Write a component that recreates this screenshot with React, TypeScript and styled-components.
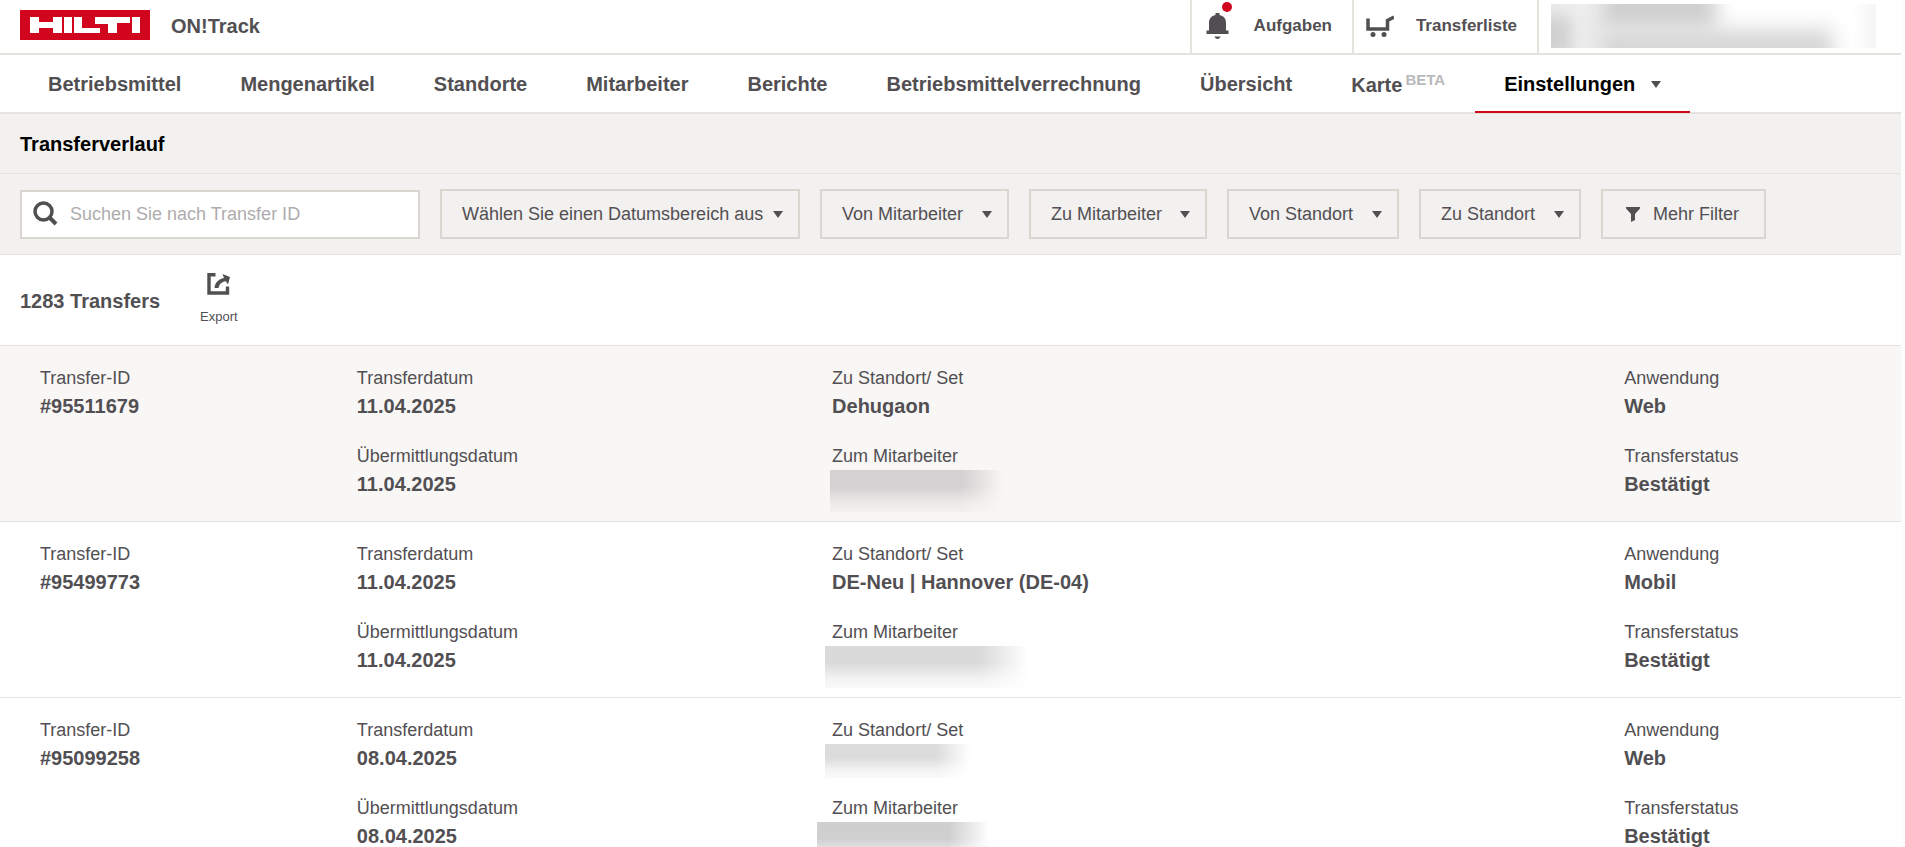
import React from "react";
import styled, { createGlobalStyle } from "styled-components";

const ink = "#524f53";
const line = "#e4e4de";
const edge = "#d7d7d0";
const red = "#d2051e";

const GlobalStyle = createGlobalStyle`
  *, *::before, *::after { box-sizing: border-box; }
  html { overflow: hidden; height: 100%; background: #fcfcfc; }
  body {
    margin: 0;
    height: 100%;
    overflow: hidden;
    font-family: "Liberation Sans", Arial, Helvetica, sans-serif;
    font-size: 18px;
    line-height: 24px;
    color: ${ink};
  }
  button, input { font: inherit; color: inherit; }
  a { color: inherit; text-decoration: none; }
  h1, h2, dl, dd, ul { margin: 0; padding: 0; }
`;

const Page = styled.div`
  margin-right: 4px;
  background: #fff;
`;

const TopBar = styled.header`
  display: flex;
  align-items: stretch;
  height: 55px;
  border-bottom: 2px solid ${line};
`;

const Brand = styled.a`
  display: flex;
  align-items: center;
  gap: 21px;
  padding: 0 20px 3px;
  margin-right: auto;
  font-size: 20px;
  font-weight: 700;
`;

const BrandName = styled.span`
  padding-top: 2px;
`;

const TopLink = styled.a<{ $width: number }>`
  display: flex;
  align-items: center;
  justify-content: space-between;
  width: ${(p) => p.$width}px;
  padding: 0 20px 2px 12px;
  border-left: 2px solid ${line};
  font-size: 17px;
  font-weight: 700;
`;

const BellWrap = styled.span`
  position: relative;
  display: flex;
  padding-left: 2px;
`;

const BellDot = styled.span`
  position: absolute;
  top: -10px;
  right: -3px;
  width: 10px;
  height: 10px;
  border-radius: 50%;
  background: ${red};
`;

const Account = styled.div`
  width: 364px;
  padding: 4px 25px 5px 12px;
  border-left: 2px solid ${line};
`;

const AccountMask = styled.div`
  position: relative;
  height: 44px;
  overflow: hidden;
  background: linear-gradient(90deg, #ececec, #f0f0f0 40px, #ffffff 60px, #fff 300px, #f5f5f5);

  &::before, &::after {
    content: "";
    position: absolute;
    background: #d0d0d0;
    filter: blur(10px);
  }
  &::before { top: -20px; left: 48px; width: 118px; height: 46px; }
  &::after { top: 25px; left: 46px; width: 236px; height: 50px; background: #d6d6d6; }
`;

const AccountAvatarMask = styled.span`
  position: absolute;
  top: 12px;
  left: -14px;
  width: 34px;
  height: 40px;
  background: #cfcfcf;
  filter: blur(8px);
`;

const Nav = styled.nav`
  display: flex;
  gap: 1px;
  height: 59px;
  padding-left: 19px;
  border-bottom: 2px solid ${line};
  font-size: 20px;
  font-weight: 700;
`;

const NavLink = styled.a<{ $active?: boolean }>`
  display: flex;
  align-items: center;
  gap: 16px;
  height: 58px;
  padding: 2px 29px 0;
  color: ${(p) => (p.$active ? "#000" : ink)};
  border-bottom: 2px solid ${(p) => (p.$active ? red : "transparent")};
  white-space: nowrap;
`;

const Beta = styled.sup`
  margin-left: 3px;
  font-size: 15px;
  line-height: 1;
  vertical-align: 7px;
  color: #b9b9bb;
`;

const Caret = styled.span`
  flex: none;
  border: 5px solid transparent;
  border-top: 7px solid ${ink};
  border-bottom: 0;
`;

const TitleBar = styled.div`
  height: 60px;
  padding: 18px 20px;
  background: #f3f1ef;
  border-bottom: 1px solid ${line};
`;

const Title = styled.h1`
  font-size: 20px;
  line-height: 24px;
  color: #000;
`;

const Filters = styled.form`
  display: flex;
  gap: 20px;
  height: 81px;
  padding: 15px 20px;
  background: #f3f1ef;
  border-bottom: 1px solid ${line};
`;

const Search = styled.label`
  display: flex;
  align-items: center;
  gap: 12px;
  width: 400px;
  height: 49px;
  margin-top: 1px;
  padding: 0 0 2px 11px;
  background: #fff;
  border: 2px solid ${edge};
`;

const SearchInput = styled.input`
  flex: 1;
  min-width: 0;
  padding: 0;
  border: 0;
  outline: 0;
  background: none;
  &::placeholder { color: #aeacae; opacity: 1; }
`;

const FilterButton = styled.button<{ $width: number }>`
  display: flex;
  align-items: center;
  justify-content: space-between;
  width: ${(p) => p.$width}px;
  height: 50px;
  padding: 0 15px 0 20px;
  background: none;
  border: 2px solid ${edge};
  white-space: nowrap;
`;

const MoreButton = styled(FilterButton)`
  padding: 0 25px 0 23px;
`;

const Summary = styled.div`
  display: flex;
  height: 91px;
  padding: 0 20px;
  gap: 40px;
  border-bottom: 1px solid ${line};
`;

const Count = styled.h2`
  padding-top: 34px;
  font-size: 20px;
  line-height: 24px;
`;

const ExportButton = styled.button`
  display: flex;
  flex-direction: column;
  align-items: center;
  gap: 14px;
  height: 72px;
  padding: 18px 0 0;
  background: none;
  border: 0;
  font-size: 13px;
  line-height: 16px;
`;

const List = styled.ul`
  list-style: none;
`;

const Row = styled.li<{ $shaded?: boolean }>`
  height: 176px;
  padding-top: 20px;
  background: ${(p) => (p.$shaded ? "#f8f7f5" : "#fff")};
  border-bottom: 1px solid ${line};
`;

const RowGrid = styled.dl`
  display: grid;
  grid-template-columns: 2fr 3fr 5fr 2fr;
  grid-auto-rows: 78px;
`;

const Field = styled.div<{ $column: number }>`
  grid-column: ${(p) => p.$column};
  padding-left: 40px;
`;

const Label = styled.dt`
  line-height: 24px;
`;

const Value = styled.dd`
  padding-top: 4px;
  font-size: 20px;
  font-weight: 700;
  line-height: 24px;
`;

const Mask = styled.dd<{ $width: number; $height: number; $outset: number; $tone: string }>`
  width: ${(p) => p.$width}px;
  height: ${(p) => p.$height}px;
  margin: 2px 0 0 -${(p) => p.$outset}px;
  background: linear-gradient(90deg, ${(p) => p.$tone} 0, ${(p) => p.$tone} 74%, transparent 97%);
  mask-image: linear-gradient(#000 0, #000 40%, rgba(0, 0, 0, 0.3) 80%, rgba(0, 0, 0, 0.15));
`;

const Logo = () => (
  <svg width="130" height="30" viewBox="0 0 130 30" role="img" aria-label="Hilti">
    <rect width="130" height="30" fill={red} />
    <g fill="#fff">
      <rect x="10" y="7" width="9" height="16" />
      <rect x="19" y="12" width="15" height="6" />
      <rect x="33" y="7" width="9" height="16" />
      <rect x="44" y="7" width="8" height="16" />
      <path d="M54 7h8v11h18v5H54z" />
      <path d="M75 7h35v6H97v10h-9V14H75z" />
      <rect x="112" y="7" width="8" height="16" />
    </g>
  </svg>
);

const BellIcon = () => (
  <svg width="23" height="28" viewBox="0 0 23 28" fill={ink} aria-hidden="true">
    <path d="M9.500 1h4v2c4.200.8 6.500 3.800 6.500 8v7.500h2.500V22H.5v-3.500H3V11c0-4.200 2.300-7.200 6.500-8z" />
    <path d="M8.500 24.500h6c-.5 1.600-1.500 2.500-3 2.500s-2.500-.9-3-2.500z" />
  </svg>
);

const CartIcon = () => (
  <svg width="28" height="24" viewBox="0 0 28 24" aria-hidden="true">
    <path d="M2 4.500V15H21.500V6.500L28 3" fill="none" stroke={ink} strokeWidth="3.500" />
    <circle cx="7" cy="20.500" r="2.500" fill={ink} />
    <circle cx="18" cy="20.500" r="2.500" fill={ink} />
  </svg>
);

const SearchIcon = () => (
  <svg width="25" height="25" viewBox="0 0 25 25" fill="none" stroke={ink} aria-hidden="true">
    <circle cx="10.500" cy="10.500" r="8.500" strokeWidth="3.500" />
    <path d="M16.500 16.500L23 23" strokeWidth="4" />
  </svg>
);

const FunnelIcon = () => (
  <svg width="14" height="16" viewBox="0 0 14 16" fill={ink} aria-hidden="true">
    <path d="M0 1h14v1.500L9 8v6l-4 2V8L0 2.500z" />
  </svg>
);

const ExportIcon = () => (
  <svg width="23" height="22" viewBox="0 0 23 22" aria-hidden="true">
    <path d="M8.500 1.700H2V20H20.500V13.500" fill="none" stroke={ink} strokeWidth="3.400" />
    <path d="M15.500 1L23 4L21 11.500L18.800 8.300C14.500 9 12.500 11 11.500 15L7.500 15C8 9.500 11.500 6.200 17 5Z" fill={ink} />
  </svg>
);

type Masked = { width: number; height: number; outset: number; tone: string };

const MaskBlock = ({ mask }: { mask: Masked }) => (
  <Mask
    aria-label="verborgen"
    $width={mask.width}
    $height={mask.height}
    $outset={mask.outset}
    $tone={mask.tone}
  />
);

const transfers: {
  id: string;
  date: string;
  place: string | Masked;
  person: Masked;
  app: string;
}[] = [
  { id: "#95511679", date: "11.04.2025", place: "Dehugaon", person: { width: 178, height: 42, outset: 2, tone: "#d3d1d1" }, app: "Web" },
  { id: "#95499773", date: "11.04.2025", place: "DE-Neu | Hannover (DE-04)", person: { width: 210, height: 42, outset: 7, tone: "#dadada" }, app: "Mobil" },
  { id: "#95099258", date: "08.04.2025", place: { width: 150, height: 34, outset: 7, tone: "#dcdcdc" }, person: { width: 178, height: 42, outset: 15, tone: "#cfcfcf" }, app: "Web" },
];

const menu = ["Betriebsmittel", "Mengenartikel", "Standorte", "Mitarbeiter", "Berichte", "Betriebsmittelverrechnung", "Übersicht"];

const filters: [string, number][] = [
  ["Wählen Sie einen Datumsbereich aus", 360],
  ["Von Mitarbeiter", 189],
  ["Zu Mitarbeiter", 178],
  ["Von Standort", 172],
  ["Zu Standort", 162],
];

export default function App() {
  return (
    <Page>
      <GlobalStyle />
      <TopBar>
        <Brand href="#">
          <Logo />
          <BrandName>ON!Track</BrandName>
        </Brand>
        <TopLink href="#" $width={162}>
          <BellWrap>
            <BellIcon />
            <BellDot />
          </BellWrap>
          Aufgaben
        </TopLink>
        <TopLink href="#" $width={185}>
          <CartIcon />
          Transferliste
        </TopLink>
        <Account>
          <AccountMask>
            <AccountAvatarMask />
          </AccountMask>
        </Account>
      </TopBar>
      <Nav>
        {menu.map((item) => (
          <NavLink href="#" key={item}>{item}</NavLink>
        ))}
        <NavLink href="#">
          <span>Karte<Beta>BETA</Beta></span>
        </NavLink>
        <NavLink href="#" $active>
          Einstellungen
          <Caret />
        </NavLink>
      </Nav>
      <TitleBar>
        <Title>Transferverlauf</Title>
      </TitleBar>
      <Filters>
        <Search>
          <SearchIcon />
          <SearchInput aria-label="Suchen Sie nach Transfer ID" placeholder="Suchen Sie nach Transfer ID" />
        </Search>
        {filters.map(([label, width]) => (
          <FilterButton type="button" key={label} $width={width}>
            {label}
            <Caret />
          </FilterButton>
        ))}
        <MoreButton type="button" $width={165}>
          <FunnelIcon />
          Mehr Filter
        </MoreButton>
      </Filters>
      <Summary>
        <Count>1283 Transfers</Count>
        <ExportButton type="button">
          <ExportIcon />
          Export
        </ExportButton>
      </Summary>
      <List>
        {transfers.map((t, i) => (
          <Row key={t.id} $shaded={i === 0}>
            <RowGrid>
              <Field $column={1}><Label>Transfer-ID</Label><Value>{t.id}</Value></Field>
              <Field $column={2}><Label>Transferdatum</Label><Value>{t.date}</Value></Field>
              <Field $column={3}>
                <Label>Zu Standort/ Set</Label>
                {typeof t.place === "string" ? <Value>{t.place}</Value> : <MaskBlock mask={t.place} />}
              </Field>
              <Field $column={4}><Label>Anwendung</Label><Value>{t.app}</Value></Field>
              <Field $column={2}><Label>Übermittlungsdatum</Label><Value>{t.date}</Value></Field>
              <Field $column={3}><Label>Zum Mitarbeiter</Label><MaskBlock mask={t.person} /></Field>
              <Field $column={4}><Label>Transferstatus</Label><Value>Bestätigt</Value></Field>
            </RowGrid>
          </Row>
        ))}
      </List>
    </Page>
  );
}
